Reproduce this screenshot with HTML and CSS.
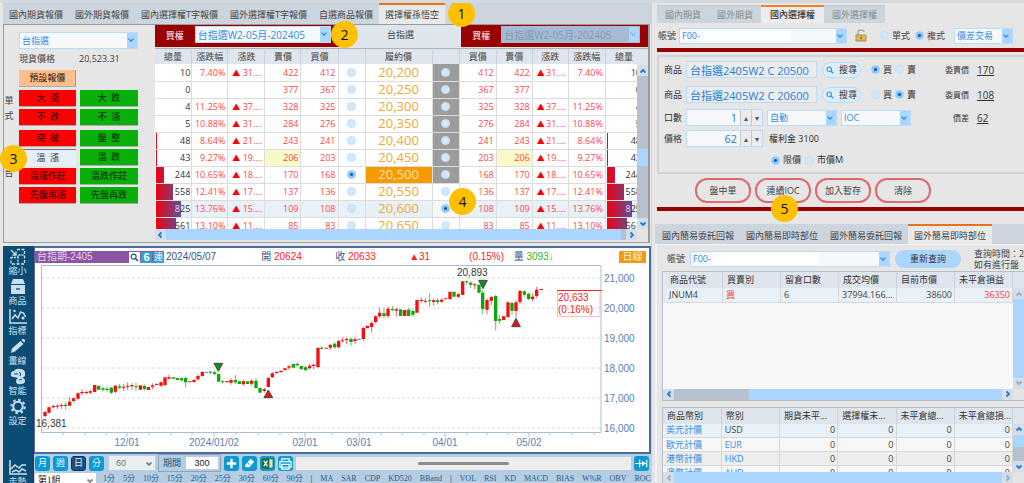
FILE: index.html
```html
<!DOCTYPE html>
<html lang="zh-Hant">
<head>
<meta charset="utf-8">
<title>選擇權孫悟空</title>
<link rel="stylesheet" href="styles.css">
</head>
<body>
<svg class="defs" aria-hidden="true">
  <symbol id="up" viewBox="0 0 8 8"><path d="M1.5 5.5 4 3l2.500 2.500" fill="none" stroke="currentColor" stroke-width="1.800"/></symbol>
  <symbol id="down" viewBox="0 0 8 8"><path d="M1.500 2.500 4 5l2.500-2.500" fill="none" stroke="currentColor" stroke-width="1.800"/></symbol>
  <symbol id="left" viewBox="0 0 8 8"><path d="M5.500 1.500 3 4l2.500 2.500" fill="none" stroke="currentColor" stroke-width="1.800"/></symbol>
  <symbol id="right" viewBox="0 0 8 8"><path d="M2.500 1.500 5 4 2.500 6.500" fill="none" stroke="currentColor" stroke-width="1.800"/></symbol>
  <symbol id="search" viewBox="0 0 10 10"><circle cx="4" cy="4" r="2.800" fill="none" stroke="currentColor" stroke-width="1.300"/><path d="M6 6l3 3" stroke="currentColor" stroke-width="1.600"/></symbol>
</svg>

<main class="app">
<div class="col-left">

  <section class="quotes">
    <nav class="tabs">
      <button>國內期貨報價</button><button>國外期貨報價</button><button>國內選擇權T字報價</button><button>國外選擇權T字報價</button><button>自選商品報價</button><button class="active">選擇權孫悟空</button>
    </nav>
    <div class="quote-panel">
      <aside class="strategy">
        <span class="pick"><select aria-label="商品"><option>台指選</option></select></span>
        <div class="spot"><span>現貨價格</span><span>20,523.31</span></div>
        <div class="strategy-body">
          <div class="side-labels"><span>單式</span><span>台</span></div>
          <div class="strategy-grid">
            <button class="preset">預設報價</button>
            <button class="r">大&ensp;漲</button><button class="g">大&ensp;跌</button>
            <button class="r">不&ensp;跌</button><button class="g">不&ensp;漲</button>
            <button class="r gap">突&ensp;破</button><button class="g gap">盤&ensp;整</button>
            <button class="sel">溫&ensp;漲</button><button class="g">溫&ensp;跌</button>
            <button class="r">溫漲作莊</button><button class="g">溫跌作莊</button>
            <button class="r">先盤再漲</button><button class="g">先盤再跌</button>
          </div>
        </div>
      </aside>

      <div class="board">
        <div class="board-top">
          <div class="side call"><b>買權</b><span class="pick"><select aria-label="買權月份"><option>台指選W2-05月-202405</option></select></span></div>
          <div class="mid">台指選</div>
          <div class="side put"><b>買權</b><span class="pick off"><select aria-label="買權月份" disabled><option>台指選W2-05月-202405</option></select></span></div>
        </div>
        <div class="board-main">
          <div class="board-clip">
            <table class="opt">
              <colgroup><col class="c37"><col class="c36"><col class="c37"><col class="c36"><col class="c37"><col class="c27"><col class="c67"><col class="c27"><col class="c37"><col class="c36"><col class="c36"><col class="c37"><col class="c37"></colgroup>
              <thead><tr><th>總量</th><th>漲跌幅</th><th>漲跌</th><th>賣價</th><th>買價</th><th></th><th>履約價</th><th></th><th>買價</th><th>賣價</th><th>漲跌</th><th>漲跌幅</th><th>總量</th></tr></thead>
              <tbody>
                <tr><td class="v">10</td><td>7.40%</td><td class="d">31....</td><td>422</td><td>412</td><td class="o"><input type="radio" name="a" aria-label="20,200"></td><td class="k">20,200</td><td class="o dk"><input type="radio" name="b" aria-label="20,200"></td><td>412</td><td>422</td><td class="d">31....</td><td>7.40%</td><td class="v">10</td></tr>
                <tr><td class="v">0</td><td></td><td></td><td>377</td><td>367</td><td class="o"><input type="radio" name="a" aria-label="20,250"></td><td class="k">20,250</td><td class="o dk"><input type="radio" name="b" aria-label="20,250"></td><td>367</td><td>377</td><td></td><td></td><td class="v">0</td></tr>
                <tr><td class="v">4</td><td>11.25%</td><td class="d">37....</td><td>328</td><td>325</td><td class="o"><input type="radio" name="a" aria-label="20,300"></td><td class="k">20,300</td><td class="o dk"><input type="radio" name="b" aria-label="20,300"></td><td>325</td><td>328</td><td class="d">37....</td><td>11.25%</td><td class="v">4</td></tr>
                <tr><td class="v">5</td><td>10.88%</td><td class="d">31....</td><td>284</td><td>276</td><td class="o"><input type="radio" name="a" aria-label="20,350"></td><td class="k">20,350</td><td class="o dk"><input type="radio" name="b" aria-label="20,350"></td><td>276</td><td>284</td><td class="d">31....</td><td>10.88%</td><td class="v">5</td></tr>
                <tr><td class="v" style="--v:1px">48</td><td>8.64%</td><td class="d">21....</td><td>243</td><td>241</td><td class="o"><input type="radio" name="a" aria-label="20,400"></td><td class="k">20,400</td><td class="o dk"><input type="radio" name="b" aria-label="20,400"></td><td>241</td><td>243</td><td class="d">21....</td><td>8.64%</td><td class="v" style="--v:1px">48</td></tr>
                <tr><td class="v" style="--v:1px">43</td><td>9.27%</td><td class="d">19....</td><td class="y">206</td><td>203</td><td class="o"><input type="radio" name="a" aria-label="20,450"></td><td class="k">20,450</td><td class="o dk"><input type="radio" name="b" aria-label="20,450"></td><td>203</td><td class="y">206</td><td class="d">19....</td><td>9.27%</td><td class="v" style="--v:1px">43</td></tr>
                <tr><td class="v" style="--v:8px">244</td><td>10.65%</td><td class="d">18....</td><td>170</td><td>168</td><td class="o"><input type="radio" name="a" aria-label="20,500" checked></td><td class="k atm">20,500</td><td class="o dk"><input type="radio" name="b" aria-label="20,500"></td><td>168</td><td>170</td><td class="d">18....</td><td>10.65%</td><td class="v" style="--v:8px">244</td></tr>
                <tr><td class="v" style="--v:17px">558</td><td>12.41%</td><td class="d">17....</td><td>137</td><td>136</td><td class="o"><input type="radio" name="a" aria-label="20,550"></td><td class="k">20,550</td><td class="o"><input type="radio" name="b" aria-label="20,550"></td><td>136</td><td>137</td><td class="d">17....</td><td>12.41%</td><td class="v" style="--v:17px">558</td></tr>
                <tr class="hl"><td class="v" style="--v:25px"><i>8</i>25</td><td>13.76%</td><td class="d">15....</td><td>109</td><td>108</td><td class="o"><input type="radio" name="a" aria-label="20,600"></td><td class="k">20,600</td><td class="o lt"><input type="radio" name="b" aria-label="20,600" checked></td><td>108</td><td>109</td><td class="d">15....</td><td>13.76%</td><td class="v" style="--v:25px"><i>8</i>25</td></tr>
                <tr><td class="v" style="--v:20px">561</td><td>13.10%</td><td class="d">11....</td><td>85</td><td>83</td><td class="o"><input type="radio" name="a" aria-label="20,650"></td><td class="k">20,650</td><td class="o"><input type="radio" name="b" aria-label="20,650"></td><td>83</td><td>85</td><td class="d">11....</td><td>13.10%</td><td class="v" style="--v:20px">561</td></tr>
              </tbody>
            </table>
          </div>
          <div class="vbar with-head"><span class="head"></span><span class="cap"><svg><use href="#up"/></svg></span><span class="track slate"><span class="thumb sky opt-thumb"></span></span><span class="cap"><svg><use href="#down"/></svg></span></div>
        </div>
        <div class="hbar"><span class="cap"><svg><use href="#left"/></svg></span><span class="track"><span class="rest opt-rest"></span></span><span class="cap"><svg><use href="#right"/></svg></span><span class="corner"></span></div>
      </div>
    </div>
    <span class="badge b1">1</span><span class="badge b2">2</span><span class="badge b3">3</span><span class="badge b4">4</span>
  </section>

  <section class="chart">
    <nav class="tools">
      <button><svg viewBox="0 0 18 17"><g fill="none" stroke="currentColor" stroke-width="1.300"><path d="M2 2l5 5M7 3.500V7H3.500"/><path d="M8 1.500h7.500V16H2V9" stroke-dasharray="3 1.500"/><path d="M2 9.500h7V16M9 9.500V7h6.500" stroke-dasharray="2 1"/></g></svg>縮小</button>
      <button><svg viewBox="0 0 18 17"><path fill="currentColor" d="M4 1h10l2 5H2zM2 7h14v9H2z"/><path stroke="#0b4c74" stroke-width="1.300" d="M7 11h4"/></svg>商品</button>
      <button><svg viewBox="0 0 18 17"><g fill="none" stroke="currentColor" stroke-width="1.500"><path d="M1 1v14h17"/><path d="M3 11l3-4 3 3 2.500-6 3 1 2 4"/></g><g fill="currentColor"><circle cx="5.500" cy="3" r="1.200"/><circle cx="14" cy="10" r="1.500"/></g></svg>指標</button>
      <button><svg viewBox="0 0 18 17"><path fill="currentColor" d="M2 15l1-4.500L11.500 3l3 3L6 13.500zM12.500 2l1-1q1-.5 2 .5t.5 2l-1 1z"/></svg>畫線</button>
      <button><svg viewBox="0 0 18 17"><path fill="currentColor" d="M5 9Q1 9 2 6q0-3 3-3 2-3 6-2 5 0 5 4 1 4-3 5 3 0 3 3t-4 3q-5 1-5-3 0-2 2-3z"/><path fill="none" stroke="#0b4c74" d="M10 4q3 1 1 4M5 6h4M10 12q2-1 3 0"/></svg>智能</button>
      <button><svg viewBox="0 0 18 17"><circle cx="9" cy="8.500" r="4.700" fill="none" stroke="currentColor" stroke-width="2"/><circle cx="9" cy="8.500" r="6.700" fill="none" stroke="currentColor" stroke-width="2" stroke-dasharray="2.600 2.660"/></svg>設定</button>
      <button class="last"><svg viewBox="0 0 18 17"><g fill="none" stroke="currentColor" stroke-width="1.500"><path d="M1 1v14h17M2 10l4-4 4 3 3-3h4M3 13l4-2 3 2 3-3 4 2"/></g></svg>走勢</button>
    </nav>
    <div class="chart-main">
      <div class="chart-panel">
        <header class="chart-head">
          <span class="sym">台指期-2405<span class="sym-icons"><svg viewBox="0 0 10 10"><use href="#search"/></svg><em class="six">6</em><em>連</em></span></span>
          <span class="date">2024/05/07</span>
          <span>開 <b>20624</b></span><span>收 <b>20633</b></span><span><b>▲31</b></span><span class="pct"><b>(0.15%)</b></span><span class="vol">量 <u>3093↓</u></span>
          <button class="daily">日線</button>
        </header>
        <svg class="plot" viewBox="36 264 614 188" role="img" aria-label="台指期日線圖">
          <path class="grid" d="M43 278H602M43 308H602M43 338H602M43 368H602M43 398H602M43 428H602"/>
          <path class="axis" d="M42.500 432.500V265.500H602V432.500Z"/>
          <path class="ticks" d="M64 433v2M86 433v2M107 433v2M128 433v4M150 433v2M172 433v2M193 433v2M215 433v4M237 433v2M259 433v2M281 433v2M306 433v4M333 433v2M360 433v4M382 433v2M403 433v2M425 433v2M446 433v4M468 433v2M488 433v2M509 433v2M530 433v4M551 433v2M573 433v2M595 433v2"/>
          <g class="ylab"><text x="605" y="281.500">21,000</text><text x="605" y="311.500">20,000</text><text x="605" y="341.500">19,000</text><text x="605" y="371.500">18,000</text><text x="605" y="401.500">17,000</text><text x="605" y="431.500">16,000</text></g>
          <g class="xlab"><text x="128" y="446">12/01</text><text x="215" y="446">2024/01/02</text><text x="306" y="446">02/01</text><text x="360" y="446">03/01</text><text x="446" y="446">04/01</text><text x="530" y="446">05/02</text></g>
          <g transform="translate(0 360) scale(.333333)">
            <path class="w red" d="M138 153V171M150 140V160M163 134V144M175 132V147M187 130V147M212 111V138M224 113V127M237 97V119M249 88V105M262 92V103M274 90V102M349 75V100M374 72V92M386 67V90M461 70V88M486 64V80M510 44V58M585 57V68M597 44V62M610 34V50M696 55V74M733 60V77M758 58V78M796 84V98M820 37V54M870 15V30M932 12V28M944 12V28"/>
            <path class="w green" d="M200 127V149M312 80V95M324 80V95M337 80V102M362 72V88M399 70V90M411 68V92M436 73V92M548 52V65M560 50V82M634 32V42M647 33V46M671 60V70M709 45V72M771 55V86M895 8V18M920 18V34"/>
            <path class="b red" d="M138 156V168M150 142V158M163 138V142M175 137V140M187 135V138M212 125V137M224 115V123M237 100V116M249 96V100M262 96V99M274 94V98M287 75V96M349 77V95M374 80V83M386 77V80M399 75V79M424 76V89M448 81V90M461 76V80M473 71V75M486 67V77M498 52V76M510 52V56M572 64V67M585 60V66M597 48V58M610 36V48M684 63V67M696 60V68M733 64V73M758 62V71M796 88V93M808 53V81M820 40V52M833 35V40M846 32V37M858 25V31M870 19V23M932 17V25M944 14V18M957-37V22"/>
            <path class="b green" d="M200 134V138M299 77V89M312 85V89M324 86V90M337 83V98M362 79V83M411 79V82M436 78V87M523 52V56M535 54V60M548 55V61M560 54V67M634 35V38M647 37V42M659 42V65M671 64V67M709 60V67M721 64V72M746 64V72M771 62V84M783 84V98M883 12V23M895 11V16M907 18V28M920 22V30"/>
            <path class="b blue" d="M622 36V39"/>
            <path class="mark dn" d="M645 10h26l-13 24z"/><path class="mark upm" d="M795 113h26l-13-23z"/>
          </g>
          <g transform="translate(320 240) scale(.333333)">
            <path class="w red" d="M34 312V330M59 300V325M71 292V307M83 292V312M108 292V312M133 261V301M158 244V277M170 225V250M182 202V234M207 200V234M232 204V230M307 172V187M319 175V190M344 176V197M368 175V188M418 158V174M467 130V147M504 175V222M517 168V195M591 180V232M567 184V234M603 150V192M641 160V184M653 140V174"/>
            <path class="w green" d="M8 318V328M47 307V326M96 292V317M195 204V234M220 198V214M269 204V225M282 208V230M332 160V200M356 175V193M443 122V134M455 124V143M480 132V160M491 150V222M530 165V271M542 225V252M579 185V224M616 150V170M629 158V180"/>
            <path class="b red" d="M22 323V326M34 315V323M59 303V322M71 301V304M83 297V300M108 298V303M133 264V297M145 257V265M158 249V261M170 229V246M182 218V229M207 206V228M232 208V212M257 210V228M294 180V218M307 180V183M319 182V185M344 181V186M368 179V185M380 175V178M393 155V178M418 163V170M431 124V165M467 133V136M504 180V209M517 171V182M554 229V240M567 187V231M591 187V213M603 153V186M641 170V177M653 149V168M667 147V150"/>
            <path class="b green" d="M8 323V326M47 311V322M96 297V306M195 220V228M220 207V210M245 208V228M269 209V228M282 213V224M332 181V184M356 181V186M405 155V170M443 124V127M455 128V134M480 135V158M491 158V207M530 168V243M542 237V242M579 189V212M616 154V164M629 161V177"/>
            <path class="b blue" d="M120 297V300"/>
            <path class="mark dn" d="M479 121h26l-13 25z"/><path class="mark upm" d="M578 260h26l-13-25z"/>
          </g>
          <path class="last-box" d="M558.500 290.500V316.500H601V290.500"/>
          <path class="last-line" d="M558 290.500H603"/>
          <g class="lab-red"><text x="559" y="301">20,633</text><text x="559" y="313">(0.16%)</text></g>
          <g class="lab-dark"><text x="458" y="276">20,893</text><text x="37" y="427">16,381</text></g>
        </svg>
      </div>
      <div class="period">
        <button>月</button><button>週</button><button class="on">日</button><button>分</button>
        <span class="plain-pick min"><select aria-label="分鐘" disabled><option>60</option></select><svg><use href="#down"/></svg></span>
        <label class="range">期間<input type="text" value="300"></label>
        <button aria-label="新增"><svg viewBox="0 0 16 16"><path d="M8 3v10M3 8h10" stroke="#fff" stroke-width="2.500"/></svg></button>
        <button aria-label="清除畫線"><svg viewBox="0 0 16 16"><path d="M4 9l5-6 4 3-5 6H5L3 11z" fill="#fff"/><path d="M6 7l3 3" stroke="#0b9bd1"/></svg></button>
        <button aria-label="Excel"><svg viewBox="0 0 16 16"><path d="M2 3l8-1v12l-8-1z" fill="#1c6b3a"/><path d="M10 3h4v10h-4" fill="#cfe6d6" stroke="#1c6b3a"/><path d="M4 5l4 6M8 5l-4 6" stroke="#fff" stroke-width="1.300"/></svg></button>
        <button aria-label="列印"><svg viewBox="0 0 16 16"><path d="M4 6V3h8v3M2 6h12v6H2zM4 9h8v5H4z" fill="#0b9bd1" stroke="#fff" stroke-width="1.300"/></svg></button>
        <div class="pan"><span></span></div>
        <button aria-label="最新"><svg viewBox="0 0 16 16"><path d="M1 8h12M6 4v8M13.500 4v8" stroke="#fff" stroke-width="1.300" fill="none"/><path d="M8.500 5l4 3-4 3z" fill="#fff"/></svg></button>
      </div>
      <div class="indicators">
        <span class="plain-pick group"><select aria-label="組別"><option>第1組</option></select><svg><use href="#down"/></svg></span>
        <div class="ind-list"><a href="#">1分</a><a href="#">5分</a><a href="#">10分</a><a href="#">15分</a><a href="#">20分</a><a href="#">25分</a><a href="#">30分</a><a href="#">60分</a><a href="#">90分</a><b>|</b><a href="#">MA</a><a href="#">SAR</a><a href="#">CDP</a><a href="#">KD520</a><a href="#">BBand</a><b>|</b><a href="#">VOL</a><a href="#">RSI</a><a href="#">KD</a><a href="#">MACD</a><a href="#">BIAS</a><a href="#">W%R</a><a href="#">OBV</a><a href="#">ROC</a></div>
      </div>
    </div>
  </section>
</div>

<div class="col-right">
  <section class="order">
    <nav class="otabs"><button>國內期貨</button><button>國外期貨</button><button class="active">國內選擇權</button><button>國外選擇權</button></nav>
    <div class="account">
      <label for="acc">帳號</label><span class="pick acc"><select id="acc"><option>F00-</option></select></span>
      <svg class="lock" viewBox="0 0 12 13"><path d="M3 6V3q0-2 3-2t3 2" fill="none" stroke="#a8a8a0" stroke-width="1.500"/><path d="M1 6h10v6H1z" fill="#d9b85c" stroke="#b09040"/><path d="M6 8v2" stroke="#7a6428" stroke-width="1.500"/></svg>
      <label class="rad"><input type="radio" name="mode">單式</label><label class="rad"><input type="radio" name="mode" checked>複式</label>
      <span class="pick combo"><select aria-label="組合"><option>價差交易</option></select></span>
    </div>
    <hr>
    <div class="ticket">
      <div class="line"><label for="p1">商品</label><input id="p1" class="box prod" value="台指選2405W2 C 20500"><button class="find"><svg><use href="#search"/></svg>搜尋</button><span class="rads"><label class="rad"><input type="radio" name="s1" checked>買</label><label class="rad"><input type="radio" name="s1">賣</label></span><span class="cap-lab">委賣價</span><u>170</u></div>
      <div class="line"><label for="p2">商品</label><input id="p2" class="box prod" value="台指選2405W2 C 20600"><button class="find"><svg><use href="#search"/></svg>搜尋</button><span class="rads"><label class="rad"><input type="radio" name="s2">買</label><label class="rad"><input type="radio" name="s2" checked>賣</label></span><span class="cap-lab">委買價</span><u>108</u></div>
      <div class="line low"><label for="q">口數</label><span class="spin"><input id="q" value="1"><button aria-label="加">▴</button><button aria-label="減">▾</button></span><span class="pick w70"><select aria-label="倉別"><option>自動</option></select></span><span class="pick w70"><select aria-label="條件"><option>IOC</option></select></span><span class="cap-lab">價差</span><u>62</u></div>
      <div class="line low"><label for="pr">價格</label><span class="spin"><input id="pr" value="62"><button aria-label="加">▴</button><button aria-label="減">▾</button></span><span class="premium">權利金 3100</span></div>
      <div class="line types"><label class="rad"><input type="radio" name="t" checked>限價</label><label class="rad"><input type="radio" name="t">市價M</label></div>
    </div>
    <div class="actions"><button>盤中單</button><button>連續IOC</button><button>加入暫存</button><button>清除</button></div>
    <hr>
    <span class="badge b5">5</span>
  </section>

  <section class="positions">
    <nav class="tabs"><button>國內簡易委託回報</button><button>國內簡易即時部位</button><button>國外簡易委託回報</button><button class="active">國外簡易即時部位</button></nav>
    <div class="pos-body">
      <div class="query"><label for="acc2">帳號</label><span class="pick acc2"><select id="acc2"><option>F00-</option></select></span><button class="requery">重新查詢</button><p>查詢時間：2<br>如有進行盤</p></div>
      <div class="gridbox first">
        <div class="gridrow">
          <table class="data ind"><thead><tr><th>商品代號</th><th>買賣別</th><th>留倉口數</th><th>成交均價</th><th>目前市價</th><th>未平倉損益</th></tr></thead>
          <tbody><tr class="hl"><td>JNUM4</td><td class="buy">買</td><td>6</td><td>37994.166...</td><td class="n">38600</td><td class="n loss">36350</td></tr></tbody></table>
          <div class="vbar with-head faded"><span class="head"></span><span class="cap"><svg><use href="#up"/></svg></span><span class="track"></span><span class="cap"><svg><use href="#down"/></svg></span></div>
        </div>
        <div class="hbar"><span class="cap"><svg><use href="#left"/></svg></span><span class="track"><span class="thumb slate pos-thumb"></span></span><span class="cap"><svg><use href="#right"/></svg></span><span class="corner"></span></div>
      </div>
      <div class="gridbox second">
        <div class="gridrow">
          <table class="data"><thead><tr><th>商品幣別</th><th>幣別</th><th>期貨未平...</th><th>選擇權未...</th><th>未平倉總...</th><th>未平倉總損...</th></tr></thead>
          <tbody>
            <tr class="hl"><td><a href="#">美元計價</a></td><td>USD</td><td class="n">0</td><td class="n">0</td><td class="n">0</td><td class="n">0</td></tr>
            <tr><td><a href="#">歐元計價</a></td><td><a href="#">EUR</a></td><td class="n">0</td><td class="n">0</td><td class="n">0</td><td class="n">0</td></tr>
            <tr class="alt"><td><a href="#">港幣計價</a></td><td><a href="#">HKD</a></td><td class="n">0</td><td class="n">0</td><td class="n">0</td><td class="n">0</td></tr>
            <tr><td><a href="#">澳幣計價</a></td><td><a href="#">AUD</a></td><td class="n">0</td><td class="n">0</td><td class="n">0</td><td class="n">0</td></tr>
          </tbody></table>
          <div class="vbar with-head"><span class="head"></span><span class="cap"><svg><use href="#up"/></svg></span><span class="track slate"><span class="thumb sky cur-thumb"></span></span><span class="cap"><svg><use href="#down"/></svg></span></div>
        </div>
        <div class="hbar faded"><span class="cap"><svg><use href="#left"/></svg></span><span class="track"></span><span class="cap"><svg><use href="#right"/></svg></span><span class="corner"></span></div>
      </div>
    </div>
  </section>
</div>
</main>
</body>
</html>
```

FILE: styles.css
```css
:root {
  --bg: #e6e6e6;
  --bar: #ccd5de;
  --head: #dfe5ec;
  --sky: #abd6ff;
  --blue: #2f8ee0;
  --slate: #b5c1cf;
  --maroon: #990000;
  --ink: #444;
}
* { box-sizing: border-box; }
body {
  margin: 0;
  background: var(--bg);
  color: var(--ink);
  font: 9px/12px "Open Sans", "Noto Sans CJK TC", sans-serif;
}
button, input, select { font: inherit; color: inherit; margin: 0; padding: 0; border: 0; background: none; border-radius: 0; }
button, label { white-space: nowrap; flex: none; }
a { color: var(--blue); text-decoration: none; }
.defs { display: none; }
hr { margin: 0; border: 0; height: 4px; background: var(--maroon); }

.app { display: grid; grid-template-columns: 651fr 373fr; height: 100vh; overflow: hidden; border-top: 3px solid #d3d9de; }
.col-left { display: flex; flex-direction: column; min-width: 0; padding-left: 3px; min-height: 0; }
.col-right { display: flex; flex-direction: column; min-width: 0; min-height: 0; border-left: 1px solid #d2d2d2; }

/* tabs */
.tabs { display: flex; background: var(--bar); height: 21px; }
.tabs button { padding: 1px 6px 0; border-top: 2px solid transparent; }
.tabs .active { background: #e9e9e9; border-top-color: #e8731c; }

/* drop-downs */
.pick { position: relative; display: inline-flex; height: 16px; border: 1px solid #b9dcfb; background: #f7f8fa; color: var(--blue); }
.pick select { appearance: none; flex: 1; width: 100%; padding-left: 2px; padding-right: 12px; opacity: 1; }
.pick::before { content: ""; position: absolute; right: 0; top: 0; bottom: 0; width: 10px; background: var(--sky); pointer-events: none; }
.pick::after { content: ""; position: absolute; right: 4px; top: 4px; width: 3px; height: 3px; border: solid #1d7fd6; border-width: 0 1px 1px 0; transform: rotate(45deg); pointer-events: none; }
.pick.off { background: #a5bbd3; color: #8398b0; border-color: #a5bbd3; }
.pick.off::after { border-color: #7fb2df; }

/* radios */
input[type="radio"] { appearance: none; width: 9px; height: 9px; border-radius: 50%; background: #d3e8fb; border: 1px solid #c2dff8; flex: none; }
input[type="radio"]:checked { background: radial-gradient(circle, #0a62bd 0 1px, #8cc6fa 2px 9px); border-color: #a4d2fb; }
.rad { display: inline-flex; align-items: center; gap: 3px; }

/* option quotes */
.quotes { position: relative; flex: none; }
.quote-panel { display: grid; grid-template-columns: 151fr 494fr; border: 1px solid #9a9a9a; border-right-width: 2px; margin-right: 1px; padding-bottom: 2px; }
.strategy { padding: 7px 17px 0 0; display: flex; flex-direction: column; }
.strategy > .pick { margin-left: 15px; height: 17px; }
.spot { display: flex; gap: 24px; margin: 4px 0 0 15px; }
.strategy-body { display: flex; margin-top: 5px; gap: 5px; }
.side-labels { display: flex; flex-direction: column; width: 10px; gap: 42px; padding-top: 23px; line-height: 15px; text-align: center; }
.strategy-grid { flex: 1; display: grid; grid-template-columns: 1fr 1fr; gap: 2px 4px; }
.strategy-grid button { height: 17px; line-height: 14px; color: #2a0a0a; border-bottom: 1px solid #aaa; }
.strategy-grid .preset { grid-column: 1; margin-right: 0; background: #ffbf8c; margin-bottom: 1px; border-right: 1px solid #999; }
.strategy-grid .preset + .r { grid-column: 1; }
.strategy-grid .r { background: #f00; }
.strategy-grid .g { background: #0ab00a; color: #052a05; }
.strategy-grid .gap { margin-top: 2px; }
.strategy-grid .sel { background: #e6eff8; color: #333; border: 0; border-top: 1px solid #777; }

.board { min-width: 0; display: flex; flex-direction: column; }
.board-top { display: flex; height: 22px; margin-bottom: 1px; background: var(--head); }
.side { display: flex; align-items: flex-start; background: var(--maroon); color: #fff; padding-top: 1px; }
.side b { font-weight: 500; width: 40px; text-align: center; line-height: 19px; color: #f0dcdc; }
.side .pick { flex: 1; height: 17px; margin-right: 8px; font-size: 10px; }
.side.call { flex: 185; }
.side.put { flex: 187; }
.mid { flex: 122; text-align: center; line-height: 20px; }
.board-main { display: flex; height: 181px; overflow: hidden; border-top: 1px solid #aab2ba; }
.board-clip { flex: 1; min-width: 0; overflow: hidden; background: #fff; }
table { border-collapse: collapse; table-layout: fixed; }
th { font-weight: 400; background: var(--head); }
.opt { width: 101.250%; }
.c27 { width: 27px; } .c36 { width: 36px; } .c37 { width: 37px; } .c67 { width: 67px; }
.opt th { height: 15px; padding: 0; border-right: 1px solid #c9d2dc; white-space: nowrap; }
.opt td { height: 17px; padding: 0 2px; text-align: right; color: #ff4747; border: 1px solid #dcdcdc; border-width: 0 1px 1px 0; white-space: nowrap; line-height: 15px; overflow: hidden; }
.opt .d::before { content: "▲"; float: left; margin-left: 2px; color: #f00; font-size: 8px; }
.opt .v { color: #333; background: linear-gradient(90deg, #f00010, #4a5aac 28px) 1px 0 / var(--v, 0) 100% no-repeat; padding-right: 1px; }
.opt .v i { font-style: normal; color: #e8d8e8; }
.opt .o { text-align: center; padding: 0; line-height: 0; }
.opt .o input { vertical-align: middle; }
.opt .dk { background: #9c9c9c; }
.opt .k { font-size: 13px; text-align: center; color: #f2a832; }
.opt .atm { background: #f59a00; color: #fbe0b0; }
.opt .y { background: #fafac8; }
.opt .hl { background: #e8f0f8; }
.opt .hl .lt { background: #f7f7f7; }

/* scroll bars */
.vbar { width: 11px; flex: none; display: flex; flex-direction: column; }
.vbar .head { height: 16px; background: var(--head); flex: none; }
.cap { flex: none; width: 11px; height: 11px; display: grid; place-items: center; background: #d5dde6; color: #1d7fd6; }
.cap svg { width: 8px; height: 8px; }
.faded .cap { color: #a3adb8; }
.track { flex: 1; background: var(--sky); position: relative; min-width: 0; display: flex; }
.track.slate, .thumb.slate { background: var(--slate); }
.vbar .track { flex-direction: column; }
.thumb.sky { background: var(--sky); }
.opt-thumb { height: 17px; margin-top: 73px; }
.hbar { display: flex; height: 11px; flex: none; }
.opt-rest { width: 1%; background: var(--slate); margin-left: auto; }
.corner { width: 11px; background: #e4e4e4; }
.pos-thumb { width: 23%; }
.cur-thumb { height: 12px; }

.badge { position: absolute; width: 27px; height: 27px; border-radius: 50%; background: #ffc000; color: #111; font: 500 14px/27px "Open Sans", sans-serif; text-align: center; }
.b1 { left: 445px; top: -3px; }
.b2 { left: 328px; top: 18px; }
.b3 { left: -3px; top: 142px; }
.b4 { left: 446px; top: 185px; }
.b5 { left: 119px; bottom: -11px; }

/* chart */
.chart { flex: 1; display: flex; min-height: 0; margin-top: 3px; overflow: hidden; }
.tools { width: 31px; flex: none; background: #0b4c74; color: #c8e0f2; display: flex; flex-direction: column; border-right: 2px solid #1d3f6b; }
.tools button { height: 30px; flex: none; display: flex; flex-direction: column; align-items: center; line-height: 11px; padding-top: 2px; }
.tools svg { width: 18px; height: 17px; flex: none; }
.tools .last { margin-top: 31px; }
.chart-main { flex: 1; min-width: 0; display: flex; flex-direction: column; background: #b5cde3; font-family: "Liberation Sans", "Noto Sans CJK TC", sans-serif; }
.chart-panel { background: #fff; border: 2px solid #4a6c9e; border-left-width: 1px; flex: none; }
.chart-head { display: flex; align-items: center; height: 14px; margin-top: 2px; font-size: 10px; color: #34568c; }
.chart-head b { font-weight: 400; color: #f22; }
.chart-head > span { flex: 73; white-space: nowrap; }
.chart-head .sym { flex: 0 0 129px; background: #8a55a3; color: #e4d2ec; display: flex; justify-content: space-between; height: 12px; line-height: 12px; padding-left: 2px; }
.sym-icons { display: flex; gap: 1px; }
.sym-icons svg { width: 11px; height: 11px; background: #fff; color: #1d4f80; padding: 1px; margin-top: 1px; }
.sym-icons em { font-style: normal; width: 11px; background: #2aa4cf; color: #fff; text-align: center; font-size: 9px; height: 11px; line-height: 11px; margin-top: 1px; }
.sym-icons .six { font-weight: 700; font-size: 11px; }
.chart-head .date { flex: 94; padding-left: 2px; }
.chart-head > .pct { flex: 44; margin-left: -14px; }
.chart-head > .vol { flex: 104; }
.vol u { text-decoration: none; color: #2fb52f; }
.daily { background: #f29a14; color: #ffeec8; width: 27px; height: 12px; line-height: 12px; margin-right: 3px; }
.plot { display: block; width: 100%; }
.plot text { font-size: 10px; }
.grid { stroke: #dcdcdc; stroke-dasharray: 3 2; fill: none; }
.axis { stroke: #a9bed8; fill: none; }
.ticks { stroke: #a9bed8; }
.ylab, .xlab { fill: #5c7fb0; }
.xlab { text-anchor: middle; }
.w { stroke-width: 2; fill: none; }
.b { stroke-width: 10; fill: none; }
.red { stroke: #f50f0f; }
.green { stroke: #0aa80a; }
.blue { stroke: #4a90d0; }
.mark { stroke: #444; stroke-width: 3; }
.dn { fill: #0c8f1c; }
.upm { fill: #e01818; }
.last-box { fill: none; stroke: #fbb; }
.last-line { stroke: #f22; }
.lab-red { fill: #f22; }
.lab-dark { fill: #333; }

.period { display: flex; align-items: center; gap: 3px; height: 18px; padding: 0 2px 0 1px; flex: none; }
.period button { width: 15px; height: 15px; flex: none; background: #0b9bd1; border-radius: 3px; color: #e2f3fb; display: grid; place-items: center; line-height: 13px; }
.period button svg { width: 15px; height: 15px; }
.period .on { background: #1d4f80; border: 1px solid #12375c; }
.plain-pick { display: inline-flex; position: relative; background: #e9eef2; color: #777; height: 14px; }
.plain-pick select { appearance: none; padding-left: 7px; width: 100%; opacity: 1; }
.plain-pick svg { position: absolute; right: 2px; top: 4px; width: 8px; height: 8px; color: #888; pointer-events: none; }
.min { width: 46px; margin-left: 2px; }
.range { display: flex; align-items: center; gap: 5px; border: 1px solid #8fa3b5; height: 18px; padding: 0 2px 0 4px; color: #23527c; }
.range input { width: 32px; height: 12px; background: #fff; text-align: center; color: #222; }
.pan { flex: 1; height: 13px; background: #ededed; display: grid; place-items: center; }
.pan span { width: 27%; height: 3px; border-radius: 2px; background: #8d8d8d; }
.indicators { display: flex; height: 16px; gap: 7px; flex: none; padding: 1px 0 0 1px; font-family: "Liberation Serif", "Noto Sans CJK TC", serif; font-size: 8px; }
.group { width: 61px; background: #fff; color: #111; font-size: 9px; flex: none; }
.group select { padding-left: 3px; }
.ind-list { flex: 1; min-width: 0; display: flex; justify-content: space-between; white-space: nowrap; }
.ind-list a, .ind-list b { color: #1f5c8b; }

/* order ticket */
.order { position: relative; padding: 2px 0 0 5px; }
.otabs { display: flex; height: 18px; }
.otabs button { background: var(--bar); color: #858b92; padding: 0 8px; border-top: 1px solid #c3ccd5; }
.otabs .active { background: #ececec; color: #333; border-top: 2px solid #f5821f; font-weight: 500; padding: 0 9px; }
.account { display: flex; align-items: center; height: 25px; padding: 0 11px 0 1px; gap: 3px; }
.acc { flex: 169; }
.acc select, .acc2 select { background: linear-gradient(#fff, #fff) 21px 0 / 54% 100% no-repeat; }
.account .lock { width: 12px; height: 13px; margin: 0 10px 0 5px; }
.account .rad + .rad { margin-left: 2px; }
.combo { flex: 58; margin-left: 6px; }
.ticket { border: 2px solid #cfd3d9; border-right: 0; margin: 3px 0 4px; padding: 0 0 1px 5px; color: #333; }
.line { display: flex; align-items: center; height: 25px; gap: 4px; }
.line.low { height: 21px; }
.box { border: 1px solid #b9dcfb; background: #ececee; color: #1f7fd8; height: 17px; padding-left: 3px; font-size: 11px; line-height: 15px; }
.prod { width: 131px; }
.find { width: 39px; height: 16px; border-radius: 8px; background: #dcedfb; border: 1px solid #b9dcfb; display: flex; align-items: center; justify-content: center; gap: 5px; margin-left: 1px; }
.find svg { width: 8px; height: 8px; color: var(--blue); }
.rads { display: flex; gap: 3px; margin-left: 6px; }
.cap-lab { font-size: 8px; width: 26px; text-align: right; white-space: nowrap; margin-left: auto; }
.line u { font-size: 10px; margin-left: 4px; width: 47px; }
.spin { display: flex; height: 17px; width: 77px; border: 1px solid #b9dcfb; background: #f7f8fa; }
.spin input { flex: 1; min-width: 0; text-align: right; padding-right: 3px; color: #1f7fd8; font-size: 11px; }
.spin button { width: 11px; background: #ececec; border-left: 1px solid #c5c5c5; font-size: 8px; line-height: 12px; color: #555; }
.w70 { width: 70px; }
.premium { margin-left: 2px; }
.types { height: 22px; padding-left: 107px; }
.actions { display: flex; gap: 4px; padding-left: 38px; margin-bottom: 4px; }
.actions button { width: 56px; height: 25px; border: 2px solid #de6a6a; border-radius: 12px; }

/* positions */
.positions { flex: 1; min-height: 0; display: flex; flex-direction: column; margin: 13px 0 0 3px; }
.positions .tabs { padding-left: 1px; flex: none; overflow: hidden; height: 20px; }
.pos-body { flex: 1; min-height: 0; display: flex; flex-direction: column; border-left: 2px solid #f3f3f3; border-top: 1px solid #f3f3f3; padding-left: 5px; gap: 5px; }
.query { display: flex; align-items: center; height: 22px; padding-left: 5px; gap: 5px; overflow: hidden; flex: none; margin-top: 3px; }
.acc2 { width: 200px; flex: none; }
.requery { background: var(--sky); width: 66px; height: 18px; border-radius: 9px; color: #333; }
.query p { margin: 0 0 0 8px; white-space: nowrap; line-height: 11px; flex: none; }
.gridbox { display: flex; flex-direction: column; border: 1px solid #b8bec5; border-right: 0; background: #f7f7f7; margin-top: -4px; }
.gridrow { display: flex; flex: 1; min-height: 0; overflow: hidden; align-items: flex-start; }
.gridrow .vbar { align-self: stretch; }
.first { flex: 129; min-height: 0; }
.second { flex: 76; min-height: 0; margin-top: 1px; border-bottom: 0; }
.data { flex: 1; min-width: 0; width: 100%; }
.data th { height: 16px; padding: 0 4px; text-align: left; border-right: 1px solid #c9d2dc; white-space: nowrap; color: #333; overflow: hidden; }
.data td { height: 14px; padding: 0 3px; border: 1px solid #d8d8d8; border-width: 0 1px 1px 0; white-space: nowrap; line-height: 12px; background: #f7f7f7; }
.data .hl td { background: #e8f0f8; }
.data .alt td { background: #ededed; }
.data .n { text-align: right; padding-right: 2px; }
.data .buy, .data .loss { color: #ff3b3b; }
.data.ind { border-left: 3px solid #e4eaf0; }
```
